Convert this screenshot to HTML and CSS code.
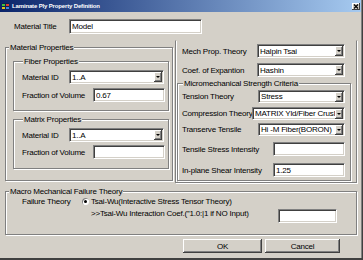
FILE: index.html
```html
<!DOCTYPE html>
<html lang="en">
<head>
  <meta charset="UTF-8">
  <title>Laminate Ply Property Definition</title>
  <link rel="stylesheet" href="styles.css">
</head>
<body>
  <div class="window">
    <!-- title bar -->
    <div class="titlebar">
      <svg class="app-icon" viewBox="0 0 7 7" width="7" height="7">
        <rect x="0" y="0" width="7" height="7" fill="#102050"/>
        <rect x="0" y="1" width="3" height="2" fill="#40c040"/>
        <rect x="0" y="4" width="3" height="2" fill="#e0c020"/>
        <rect x="4" y="1" width="3" height="2" fill="#e04030"/>
        <rect x="4" y="4" width="3" height="2" fill="#4080e0"/>
      </svg>
      <span class="title">Laminate Ply Property Definition</span>
      <span class="close">
        <svg viewBox="0 0 8 7" width="8" height="7">
          <path d="M2 1.5 L6 5.5 M6 1.5 L2 5.5" stroke="#000" stroke-width="1.2"/>
        </svg>
      </span>
    </div>

    <div class="title-row">
      <span class="lbl">Material Title</span>
      <input class="field title-field" value="Model">
    </div>

    <div class="columns">
      <!-- left column -->
      <fieldset class="group main-group">
        <legend>Material Properties</legend>

        <fieldset class="group sub-group fiber">
          <legend>Fiber Properties</legend>
          <div class="row id-row">
            <span class="lbl">Material ID</span>
            <div class="combo"><span class="value">1..A</span><span class="drop"></span></div>
          </div>
          <div class="row vol-row">
            <span class="lbl">Fraction of Volume</span>
            <input class="field" value="0.67">
          </div>
        </fieldset>

        <fieldset class="group sub-group matrix">
          <legend>Matrix Properties</legend>
          <div class="row id-row">
            <span class="lbl">Material ID</span>
            <div class="combo"><span class="value">1..A</span><span class="drop"></span></div>
          </div>
          <div class="row vol-row">
            <span class="lbl">Fraction of Volume</span>
            <input class="field" value="">
          </div>
        </fieldset>
      </fieldset>

      <!-- right column -->
      <div class="side">
        <div class="row theory-row first">
          <span class="lbl">Mech Prop. Theory</span>
          <div class="combo"><span class="value">Halpin Tsai</span><span class="drop"></span></div>
        </div>
        <div class="row theory-row second">
          <span class="lbl">Coef. of Expantion</span>
          <div class="combo"><span class="value">Hashin</span><span class="drop"></span></div>
        </div>

        <fieldset class="group micro">
          <legend>Micromechanical Strength Criteria</legend>
          <div class="row tension">
            <span class="lbl">Tension Theory</span>
            <div class="combo"><span class="value">Stress</span><span class="drop"></span></div>
          </div>
          <div class="row compression">
            <span class="lbl">Compression Theory</span>
            <div class="combo"><span class="value">MATRIX Yld/Fiber Crusl</span><span class="drop"></span></div>
          </div>
          <div class="row transverse">
            <span class="lbl">Transerve Tensile</span>
            <div class="combo"><span class="value">Hi -M Fiber(BORON)</span><span class="drop"></span></div>
          </div>
          <div class="row intensity tensile">
            <span class="lbl">Tensile Stress Intensity</span>
            <input class="field" value="">
          </div>
          <div class="row intensity shear">
            <span class="lbl">In-plane Shear Intensity</span>
            <input class="field" value="1.25">
          </div>
        </fieldset>
      </div>
    </div>

    <fieldset class="group macro">
      <legend>Macro Mechanical Failure Theory</legend>
      <div class="row failure">
        <span class="lbl">Failure Theory</span>
        <span class="radio"></span>
        <span>Tsai-Wu(Interactive Stress Tensor Theory)</span>
      </div>
      <div class="row coef">
        <span class="coef-text">&gt;&gt;Tsai-Wu Interaction Coef.(”1.0:|1 if NO Input)</span>
        <input class="field" value="">
      </div>
    </fieldset>

    <div class="buttons">
      <button class="btn ok">OK</button>
      <button class="btn cancel">Cancel</button>
    </div>
  </div>
</body>
</html>
```

FILE: styles.css
```css
/* dialog base */
* {
  box-sizing: border-box;
}

body {
  margin: 0;
  background: #d4d0c8;
  font-family: "Liberation Sans", Arial, sans-serif;
  font-size: 8px;
  letter-spacing: -0.2px;
  color: #000;
}

.window {
  width: 363px;
  height: 260px;
  background: #d4d0c8;
  border-right: 1px solid #404040;
  border-bottom: 2px solid #404040;
  box-shadow: inset -1px 0 0 #808080;
}

/* title bar */
.titlebar {
  display: flex;
  align-items: center;
  width: 361px;
  height: 12px;
  padding: 0 1px 0 2px;
  background: linear-gradient(to right, #0a246a, #a6caf0);
}

.app-icon {
  display: block;
  margin-right: 3px;
}

.title {
  color: #fff;
  font-weight: bold;
  font-size: 6px;
  letter-spacing: -0.15px;
  white-space: nowrap;
}

.close {
  display: flex;
  margin-left: auto;
  width: 8px;
  height: 7px;
  background: #d4d0c8;
  box-shadow: inset -1px -1px 0 #404040, inset 1px 1px 0 #fff;
}

/* generic pieces */
.row {
  display: flex;
  align-items: center;
}

.lbl {
  flex: none;
  white-space: nowrap;
}

.field {
  height: 14px;
  margin: 0;
  padding: 0 2px;
  border: 1px solid;
  border-color: #808080 #fff #fff #808080;
  box-shadow: inset 1px 1px 0 #404040, inset -1px -1px 0 #d4d0c8;
  background: #fff;
  font: inherit;
  letter-spacing: inherit;
  color: #000;
  outline: none;
}

.combo {
  display: flex;
  align-items: center;
  height: 14px;
  padding: 0 1px 0 0;
  border: 1px solid;
  border-color: #808080 #fff #fff #808080;
  box-shadow: inset 1px 1px 0 #404040, inset -1px -1px 0 #d4d0c8;
  background: #fff;
}

.combo .value {
  flex: 1;
  overflow: hidden;
  white-space: nowrap;
  padding-left: 2px;
}

.combo .drop {
  position: relative;
  flex: none;
  width: 8px;
  height: 10px;
  background: #d4d0c8;
  box-shadow: inset -1px -1px 0 #404040, inset 1px 1px 0 #fff, inset -2px -2px 0 #808080;
}

.combo .drop::after {
  content: "";
  position: absolute;
  left: 2px;
  top: 4px;
  border-left: 2px solid transparent;
  border-right: 2px solid transparent;
  border-top: 2px solid #000;
}

/* group boxes (etched) */
.group {
  margin: 0;
  padding: 0;
  min-inline-size: 0;
  border: 1px solid #808080;
  box-shadow: inset 1px 1px 0 #fff, 1px 1px 0 #fff;
}

.group > legend {
  padding: 0 1px;
  line-height: 11px;
  background: #d4d0c8;
}

/* material title */
.title-row {
  display: flex;
  align-items: center;
  height: 15px;
  margin-top: 7px;
  padding-left: 14px;
}

.title-row .lbl {
  width: 55px;
}

.title-field {
  width: 133px;
  height: 15px;
}

/* two columns */
.columns {
  display: flex;
  align-items: flex-start;
  margin-top: 6px;
}

.main-group {
  width: 168px;
  margin: 2px 0 0 5px;
  padding-bottom: 11px;
}

.main-group > legend {
  margin-left: 3px;
}

.sub-group {
  width: 156px;
  margin: 3px 0 0 7px;
  padding: 0 0 8px 8px;
}

.sub-group > legend {
  margin-left: 1px;
}

.matrix {
  padding-bottom: 9px;
}

.id-row {
  margin-top: 3px;
}

.id-row .lbl {
  width: 47px;
}

.id-row .combo {
  width: 95px;
}

.vol-row {
  margin-top: 4px;
}

.matrix .vol-row {
  margin-top: 3px;
}

.vol-row .lbl {
  width: 71px;
}

.vol-row .field {
  width: 72px;
}

/* right column */
.side {
  width: 182px;
  margin-left: 2px;
  padding: 0 1px 1px;
  border: 1px solid #808080;
  border-top-color: transparent;
  box-shadow: inset 1px 0 0 #fff, 1px 1px 0 #fff;
}

.theory-row {
  padding-left: 5px;
}

.theory-row.first {
  margin-top: 3px;
}

.theory-row.second {
  margin-top: 5px;
}

.theory-row .lbl {
  width: 75px;
}

.theory-row .combo {
  width: 88px;
}

.micro {
  width: 174px;
  margin-top: 1px;
  padding: 0 0 3px 4px;
}

.micro > legend {
  margin-left: 1px;
}

.micro .combo {
  height: 13px;
}

.tension {
  margin-top: 1px;
}

.compression {
  margin-top: 4px;
}

.transverse {
  margin-top: 3px;
}

.tension .lbl,
.transverse .lbl {
  width: 76px;
}

.tension .combo,
.transverse .combo {
  width: 87px;
}

.compression .lbl {
  width: 70px;
}

.compression .combo {
  width: 93px;
}

.intensity .lbl {
  width: 91px;
}

.intensity .field {
  width: 72px;
}

.tensile {
  margin-top: 6px;
}

.shear {
  margin-top: 7px;
}

/* macro failure theory */
.macro {
  width: 352px;
  margin: 3px 0 0 5px;
  padding: 0 0 11px 0;
}

.macro > legend {
  margin-left: 3px;
}

.failure {
  height: 8px;
  padding-left: 16px;
  white-space: nowrap;
}

.failure .lbl {
  width: 60px;
}

.radio {
  position: relative;
  flex: none;
  width: 7px;
  height: 7px;
  margin-right: 2px;
  border-radius: 50%;
  background: #fff;
  box-shadow: inset 1px 1px 0 #808080;
}

.radio::after {
  content: "";
  position: absolute;
  left: 2px;
  top: 2px;
  width: 3px;
  height: 3px;
  border-radius: 50%;
  background: #000;
}

.coef {
  align-items: flex-start;
  margin-top: 4px;
  padding-left: 85px;
}

.coef-text {
  width: 187px;
  line-height: 10px;
  white-space: nowrap;
}

.coef .field {
  width: 59px;
}

/* buttons */
.buttons {
  display: flex;
  gap: 3px;
  margin-top: 4px;
  padding-left: 183px;
}

.btn {
  height: 14px;
  margin: 0;
  padding: 0;
  border: none;
  background: #d4d0c8;
  box-shadow: inset -1px -1px 0 #404040, inset 1px 1px 0 #fff, inset -2px -2px 0 #808080;
  font: inherit;
  letter-spacing: inherit;
  color: #000;
}

.ok {
  width: 79px;
}

.cancel {
  width: 75px;
}
```
